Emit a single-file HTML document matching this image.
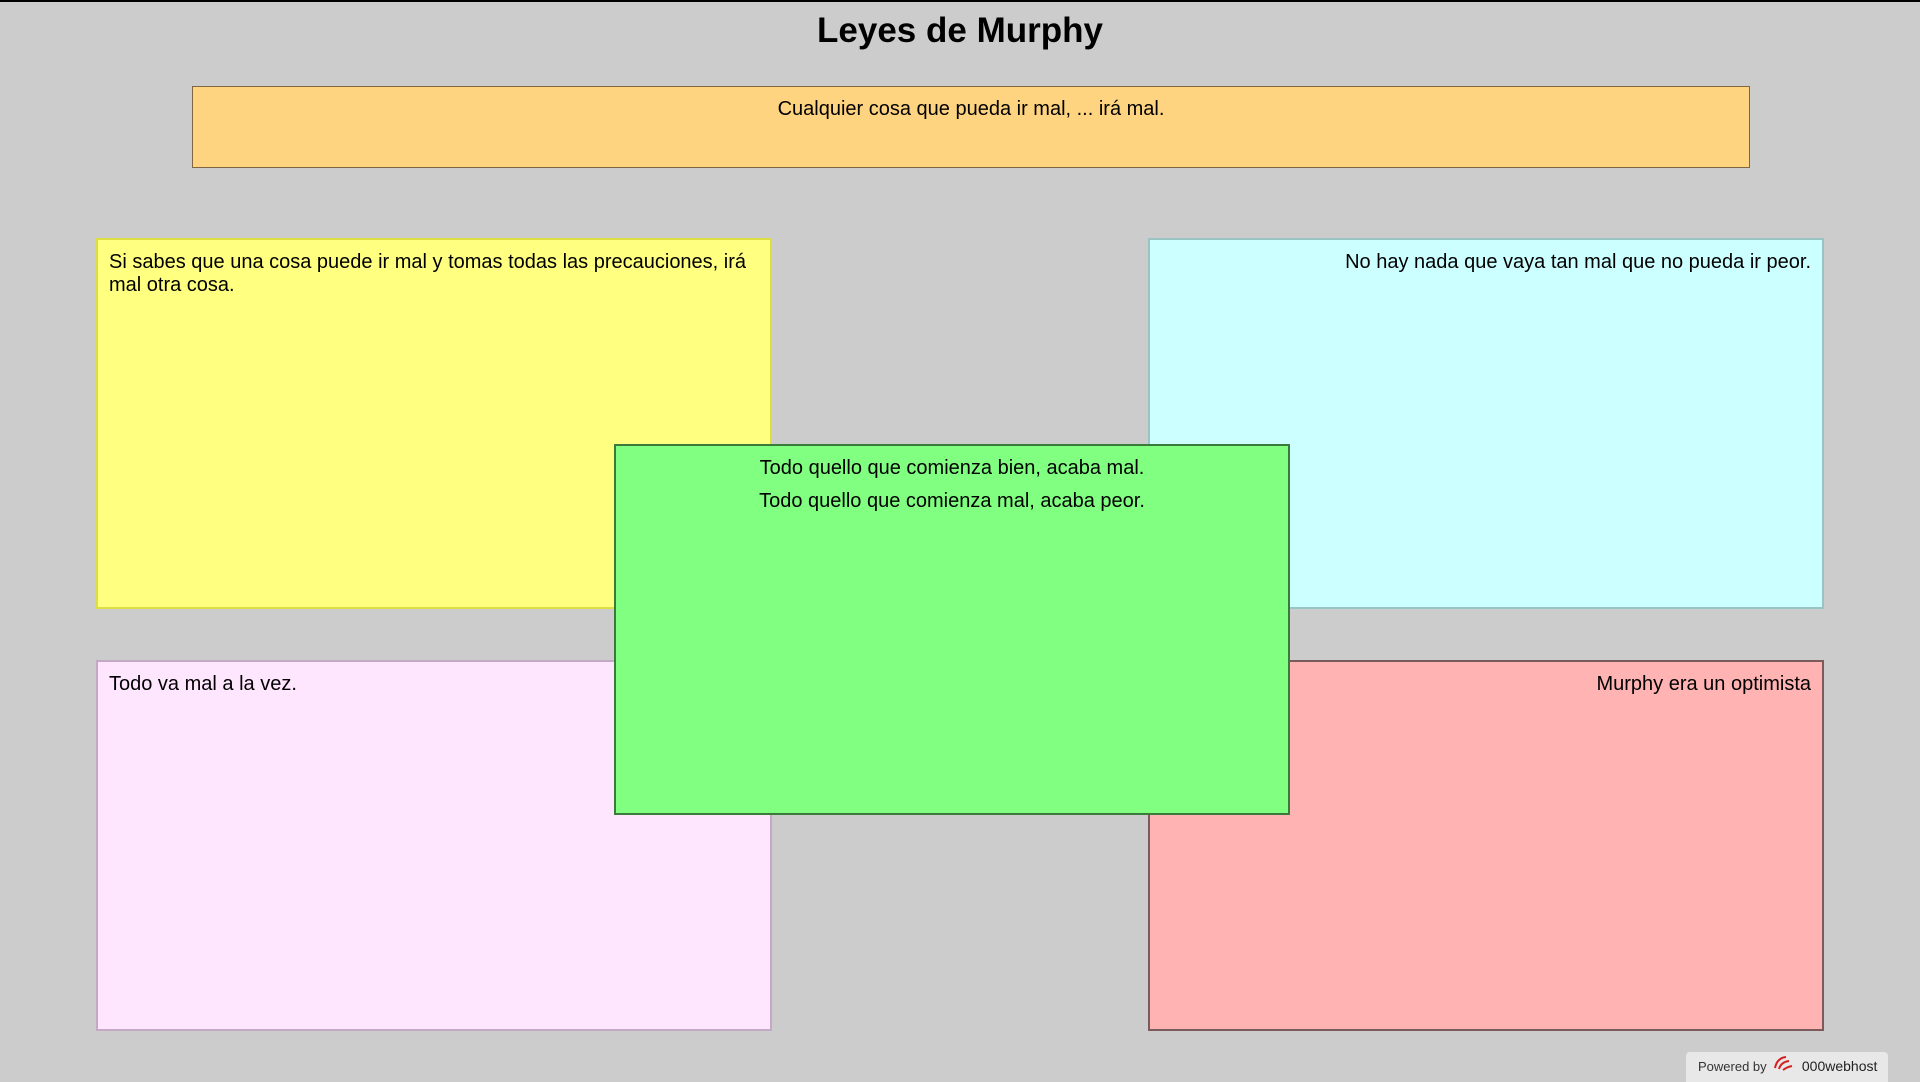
<!DOCTYPE html>
<html><head><meta charset="utf-8"><style>
html,body{margin:0;padding:0}
body{width:1920px;height:1080px;background:#cccccc;font-family:"Liberation Sans",Arial,sans-serif;position:relative;overflow:hidden;border-top:2px solid #000;box-sizing:border-box}
h1{position:absolute;left:0;right:0;top:8px;margin:0;text-align:center;font-size:35px;font-weight:bold;line-height:42px;color:#000}
.b{position:absolute;box-sizing:border-box;padding:11px 11px;font-size:20px;line-height:23px;color:#000}
.b p{margin:0 0 10px 0}
</style></head><body>
<h1>Leyes de Murphy</h1>
<div class="b" style="left:192px;top:84px;width:1558px;height:82px;background:#ffd480;border:1px solid #806640;text-align:center;padding-top:11px">Cualquier cosa que pueda ir mal, ... irá mal.</div>
<div class="b" style="left:96px;top:236px;width:676px;height:371px;background:#ffff80;border:2px solid #dddd44">Si sabes que una cosa puede ir mal y tomas todas las precauciones, irá mal otra cosa.</div>
<div class="b" style="left:1148px;top:236px;width:676px;height:371px;background:#ccffff;border:2px solid #99c4c4;text-align:right">No hay nada que vaya tan mal que no pueda ir peor.</div>
<div class="b" style="left:96px;top:658px;width:676px;height:371px;background:#ffe6ff;border:2px solid #c4a8c4">Todo va mal a la vez.</div>
<div class="b" style="left:1148px;top:658px;width:676px;height:371px;background:#ffb3b3;border:2px solid #7a5a5a;text-align:right">Murphy era un optimista</div>
<div class="b" style="left:614px;top:442px;width:676px;height:371px;background:#80ff80;border:2px solid #3a7a3a;text-align:center;padding-top:11px"><p>Todo quello que comienza bien, acaba mal.</p><p>Todo quello que comienza mal, acaba peor.</p></div>
<div style="position:absolute;left:1686px;top:1050px;width:202px;height:30px;background:#e8e8e8;border-radius:4px 4px 0 0;font-size:13px;color:#333;line-height:28px;box-sizing:border-box;padding-left:12px">Powered by <span style="display:inline-block;width:24px;vertical-align:middle;margin:0 2px"><svg width="22" height="18" viewBox="0 0 22 18"><path d="M3 14 Q5 4 14 3" stroke="#d62020" stroke-width="2" fill="none"/><path d="M7 15 Q9 8 17 7" stroke="#d62020" stroke-width="2" fill="none"/><path d="M11 16 Q15 13 20 12" stroke="#d62020" stroke-width="2" fill="none"/></svg></span> <span style="font-size:14px;color:#222">000webhost</span></div>
</body></html>
